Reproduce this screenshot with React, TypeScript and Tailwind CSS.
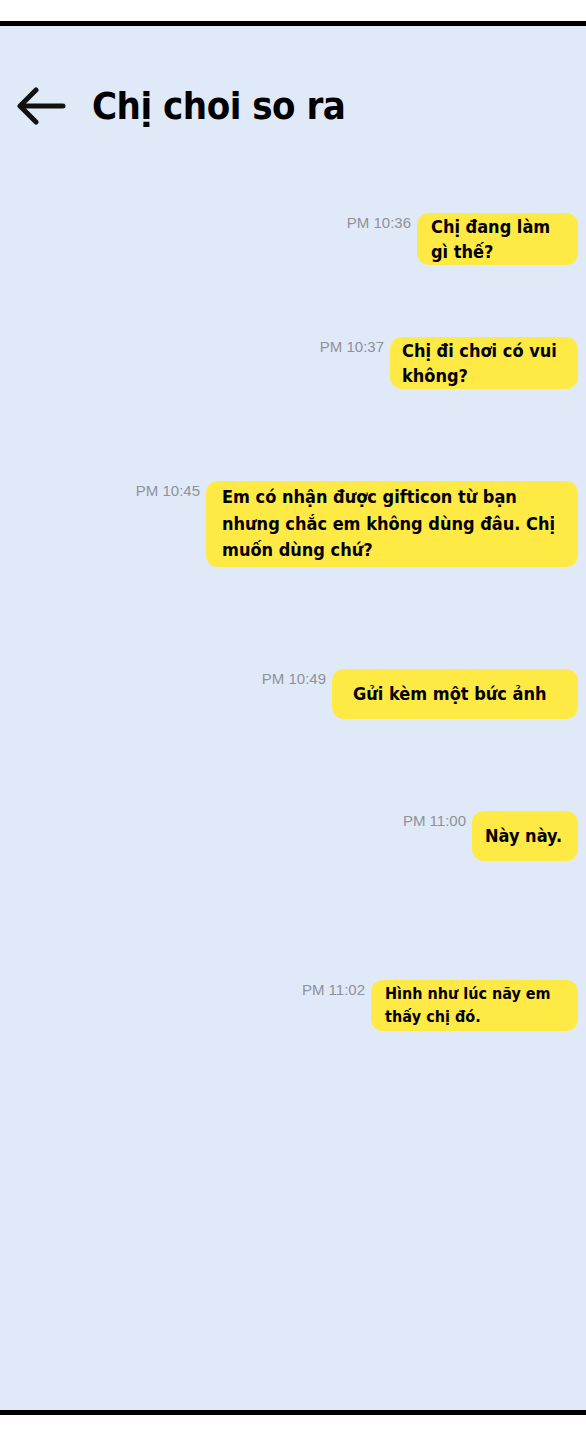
const messages = [
  { time: 'PM 10:36', lines: ['Chị đang làm', 'gì thế?'], width: 'w-[161px]', space: 'mt-[92px]', box: 'pl-[14px] py-[1px] text-[18px] leading-[25px]' },
  { time: 'PM 10:37', lines: ['Chị đi chơi có vui', 'không?'], width: 'w-[188px]', space: 'mt-[72px]', box: 'pl-[12px] py-[1px] text-[18px] leading-[25px]' },
  { time: 'PM 10:45', lines: ['Em có nhận được gifticon từ bạn', 'nhưng chắc em không dùng đâu. Chị', 'muốn dùng chứ?'], width: 'w-[372px]', space: 'mt-[92px]', box: 'pl-[16px] py-[3px] text-[18px] leading-[26.5px]' },
  { time: 'PM 10:49', lines: ['Gửi kèm một bức ảnh'], width: 'w-[246px]', space: 'mt-[102px]', box: 'pl-[21px] py-[12px] text-[18px] leading-[26px]' },
  { time: 'PM 11:00', lines: ['Này này.'], width: 'w-[106px]', space: 'mt-[92px]', box: 'pl-[13px] py-[12px] text-[18px] leading-[26px]' },
  { time: 'PM 11:02', lines: ['Hình như lúc nãy em', 'thấy chị đó.'], width: 'w-[207px]', space: 'mt-[119px]', box: 'pl-[14px] py-[2.5px] text-[16px] leading-[23px]' },
];

const font = { fontFamily: '"DejaVu Sans Condensed", "DejaVu Sans", sans-serif', fontStretch: 'condensed' };

type Msg = { time: string; lines: string[]; width: string; space: string; box: string };

function Message({ time, lines, width, space, box }: Msg) {
  return (
    <div className={`flex justify-end items-start gap-[6px] ${space}`}>
      <span
        className="pt-[1px] text-[15px] leading-[18px] text-[#8e9299]"
        style={{ fontFamily: '"Liberation Sans", Arial, sans-serif' }}
      >
        {time}
      </span>
      <div
        className={`${width} rounded-[12px] bg-[#ffe945] font-bold text-black whitespace-nowrap ${box}`}
        style={font}
      >
        {lines.map((l) => (
          <div key={l}>{l}</div>
        ))}
      </div>
    </div>
  );
}

export default function App() {
  return (
    <div className="w-[586px] h-[1443px] bg-white">
      <div className="h-[21px]" />
      <div className="h-[1394px] border-y-[5px] border-black bg-[#e0e9f8] pr-[8px]">
        <div className="flex items-center h-[30px] mt-[65px] pl-[17px] gap-[26px]">
          <svg width="49" height="38" viewBox="0 0 49 38" fill="none" stroke="#111" strokeWidth="5" strokeLinecap="round" strokeLinejoin="round">
            <path d="M46 19H4" />
            <path d="M19 3L3 19L19 35" />
          </svg>
          <h1 className="text-[38px] font-bold leading-none text-black tracking-[-0.5px]" style={font}>
            Chị choi so ra
          </h1>
        </div>
        {messages.map((m) => (
          <Message key={m.time} {...m} />
        ))}
      </div>
    </div>
  );
}
